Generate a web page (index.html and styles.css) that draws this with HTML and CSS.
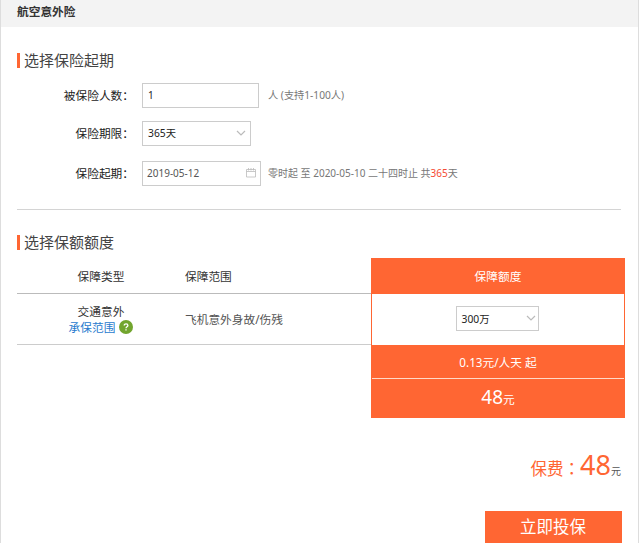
FILE: index.html
```html
<!DOCTYPE html>
<html lang="zh-CN">
<head>
<meta charset="utf-8">
<title>航空意外险</title>
<link rel="stylesheet" href="styles.css">
</head>
<body>
<main class="panel">
  <header class="panel-title">航空意外险</header>
  <section class="period">
    <h2 class="heading">选择保险起期</h2>
    <div class="field">
      <span class="label">被保险人数：</span>
      <div class="control control-count">1</div>
      <span class="hint hint-count">人 (支持1-100人)</span>
    </div>
    <div class="field">
      <span class="label">保险期限：</span>
      <div class="control control-term">365天
        <svg class="chevron" viewBox="0 0 10 7"><path d="M1 1l4 4 4-4"/></svg>
      </div>
    </div>
    <div class="field field-date">
      <span class="label">保险起期：</span>
      <div class="control control-date">2019-05-12
        <svg class="calendar" viewBox="0 0 10 10"><path d="M.5 1.500h9v7.500h-9zM.5 3.500h9M2.500 0v2.500M5 0v2.500M7.500 0v2.500"/></svg>
      </div>
      <span class="hint hint-date">零时起 至 2020-05-10 二十四时止 共<em>365</em>天</span>
    </div>
  </section>
  <section class="coverage">
    <h2 class="heading">选择保额额度</h2>
    <div class="plan">
      <div class="details">
        <div class="row row-head"><span class="type">保障类型</span><span>保障范围</span></div>
        <div class="row row-body">
          <div class="type">
            <div>交通意外</div>
            <div class="scope">承保范围<svg class="help" viewBox="0 0 14 14"><circle cx="7" cy="7" r="7"/><path d="M5.200 5.500c0-2.200 3.700-2.200 3.700 0 0 1.300-1.900 1.300-1.900 2.700M7 9.300v1.300"/></svg></div>
          </div>
          <span class="range">飞机意外身故/伤残</span>
        </div>
      </div>
      <div class="amount">
        <div class="amount-head">保障额度</div>
        <div class="amount-select">
          <div class="control control-amount">300万
            <svg class="chevron" viewBox="0 0 10 7"><path d="M1 1l4 4 4-4"/></svg>
          </div>
        </div>
        <div class="rate">0.13元/人天 起</div>
        <div class="price"><b>48</b>元</div>
      </div>
    </div>
  </section>
  <footer class="checkout">
    <div class="total"><span>保费<i class="colon" lang="zh-TW">：</i></span><b>48</b><small>元</small></div>
    <div class="submit">立即投保</div>
  </footer>
</main>
</body>
</html>
```
FILE: styles.css
```css
* { box-sizing: border-box; }
body {
  margin: 0;
  height: 543px;
  overflow: hidden;
  background: #fff;
  color: #333;
  font: 11.7px/16px "Noto Sans", "Noto Sans CJK SC", sans-serif;
  white-space: nowrap;
}
.panel { width: 639px; height: 543px; border-left: 1px solid #ddd; border-right: 1px solid #ddd; }
.panel-title { height: 27px; padding-left: 16px; background: #f3f3f3; font-weight: bold; line-height: 22px; }
.period { height: 183px; margin: 0 17px 0 16px; padding-top: 24px; border-bottom: 1px solid #d4d4d4; }
.heading {
  display: flex;
  align-items: center;
  height: 18px;
  margin: 0;
  color: #444;
  font-size: 15px;
  font-weight: normal;
}
.heading::before { content: ""; width: 3px; height: 15px; margin-right: 4px; background: #f63; }
.field { display: flex; align-items: center; height: 38px; }
.heading + .field { margin-top: 7px; }
.field-date { height: 42px; }
.label { flex: none; width: 125px; padding-right: 8px; text-align: right; color: #222; }
.control {
  display: flex;
  align-items: center;
  justify-content: space-between;
  height: 25px;
  padding: 0 4px 0 5px;
  border: 1px solid #ccc;
  background: #fff;
  font-size: 10px;
  color: #222;
}
.control-count { width: 117px; }
.control-term { width: 109px; }
.control-date { width: 119px; padding-left: 4px; color: #555; }
.control-amount { width: 83px; margin-right: 2px; padding-right: 2px; }
.control-term, .control-amount { font-size: 10.3px; }
.chevron { width: 10px; height: 7px; fill: none; stroke: #bbb; stroke-width: 1.2; }
.calendar { width: 10px; height: 10px; fill: none; stroke: #bbb; stroke-width: .8; }
.hint { color: #777; font-size: 10px; }
.hint-count { margin-left: 9px; font-size: 10.2px; }
.hint-date { margin-left: 7px; }
.hint em { color: #f54b32; font-style: normal; }
.coverage { margin: 0 13px 0 16px; padding-top: 23px; }
.plan { display: grid; grid-template-columns: 354px 254px; margin-top: 7px; }
.row { display: grid; grid-template-columns: 168px 1fr; align-items: center; border-bottom: 1px solid #bbb; }
.row-head { height: 36px; }
.row-body { height: 51px; border-color: #ccc; }
.type { text-align: center; }
.scope { display: flex; align-items: center; justify-content: center; gap: 4px; color: #287bce; }
.help { width: 14px; height: 14px; fill: #72a52e; }
.help path { fill: none; stroke: #fff; stroke-width: 1.3; }
.range { color: #555; }
.amount { height: 160px; background: #f63; color: #fff; text-align: center; }
.amount-head { height: 36px; line-height: 37px; }
.amount-select { display: flex; align-items: center; justify-content: center; height: 51px; margin: 0 1px; padding-bottom: 2px; background: #fff; }
.rate { height: 34px; margin: 0 1px; border-bottom: 1px solid #ffd9c9; line-height: 34px; }
.price { line-height: 37px; }
.price b { font-size: 19px; font-weight: normal; }
.checkout { display: flex; flex-direction: column; align-items: flex-end; margin-right: 16px; padding-top: 27px; }
.total { display: flex; align-items: baseline; height: 66px; margin-right: 1px; color: #f63; line-height: 40px; }
.total span { font-size: 16.5px; }
.colon { font-family: "Noto Sans CJK TC", sans-serif; font-style: normal; }
.total b { font-size: 27px; font-weight: normal; }
.total small { color: #555; font-size: 10px; }
.submit { width: 137px; height: 33px; padding-right: 1px; background: #f63; color: #fff; font-size: 16.5px; line-height: 32px; text-align: center; }
```
